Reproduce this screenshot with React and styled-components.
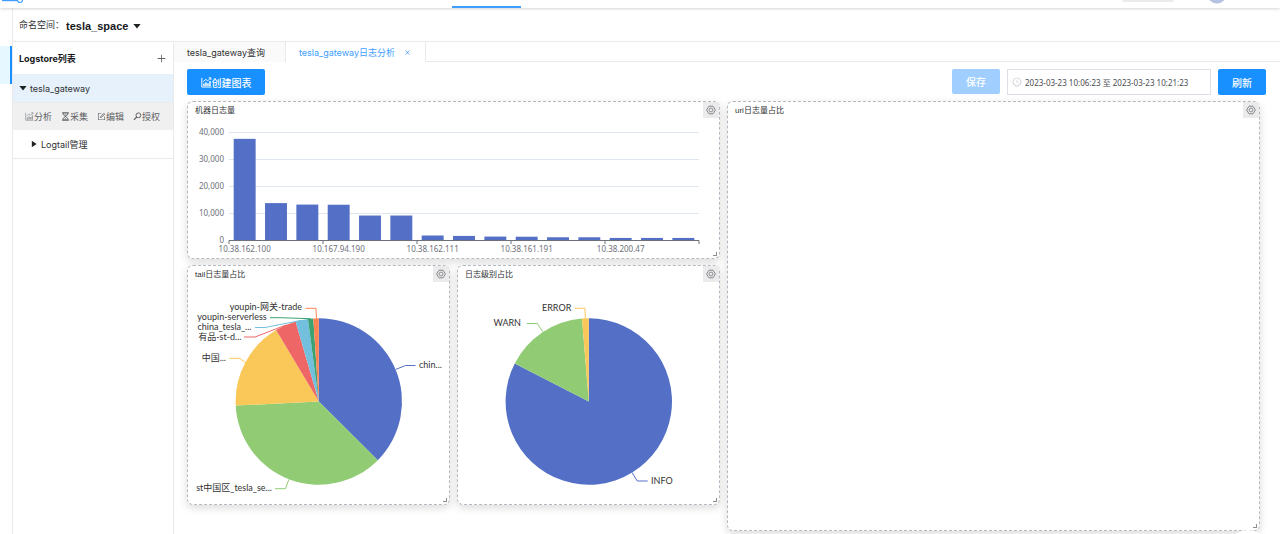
import React from 'react'
import styled, { createGlobalStyle, ThemeProvider } from 'styled-components'
import {
  AiOutlineForm,
  AiOutlineClockCircle,
  AiOutlinePlus,
  AiOutlineClose,
} from 'react-icons/ai'

const theme = {
  primary: '#1890ff',
  link: '#409eff',
  border: '#e8eaec',
  text: '#303133',
  muted: '#606266',
  mobile: '720px',
}

const palette = ['#5470c6', '#91cc75', '#fac858', '#ee6666', '#73c0de', '#3ba272', '#fc8452']

const GlobalStyle = createGlobalStyle`
  * {
    box-sizing: border-box;
  }
  body {
    margin: 0;
    overflow: hidden;
    background: #ffffff;
    color: #303133;
    font-family: Inter, "Noto Sans CJK SC", sans-serif;
    font-size: 9px;
  }
  button, input, select {
    margin: 0;
    padding: 0;
    border: none;
    background: none;
    color: inherit;
    font: inherit;
  }
  button {
    cursor: pointer;
  }
`

const Page = styled.div`
  display: flex;
  flex-direction: column;
  min-height: 100vh;
`

/* top bar */
const TopBar = styled.header`
  z-index: 1;
  display: grid;
  grid-template-columns: 452px 69px 1fr auto;
  height: 8px;
  box-shadow: 0 1px 3px rgba(0, 21, 41, 0.18);
  background: #ffffff;
`
const Brand = styled.svg`
  width: 24px;
  height: 4px;
`
const NavMark = styled.div`
  align-self: end;
  height: 2px;
  background: ${({ theme }) => theme.link};
`
const TopTools = styled.div`
  display: flex;
  grid-column: 4;
  gap: 33px;
  height: 4px;
  padding-right: 53px;
  overflow: hidden;
`
const Pill = styled.div`
  width: 52px;
  height: 2px;
  border-radius: 0 0 2px 2px;
  background: #ebebeb;
`
const Avatar = styled.svg`
  width: 20px;
  height: 4px;
`

/* shell */
const Shell = styled.div`
  display: flex;
  flex: 1;
`
const Rail = styled.nav`
  flex: none;
  width: 13px;
  padding-top: 38px;
  border-right: 1px solid ${({ theme }) => theme.border};
`
const RailItem = styled.a`
  display: block;
  height: 38px;
  border-right: 2px solid ${({ theme }) => theme.primary};
  background: #e6f7ff;
`
const Main = styled.div`
  display: flex;
  flex: 1;
  flex-direction: column;
  min-width: 0;
`
const NamespaceBar = styled.div`
  display: flex;
  align-items: center;
  height: 34px;
  padding-left: 6px;
  border-bottom: 1px solid ${({ theme }) => theme.border};
`
const NamespaceLabel = styled.label`
  width: 47px;
  white-space: nowrap;
`
const NamespacePicker = styled.div`
  display: flex;
  align-items: center;
  padding-top: 3px;
`
const NamespaceSelect = styled.select`
  width: 67px;
  outline: none;
  appearance: none;
  color: #17191c;
  font-family: "Liberation Sans", sans-serif;
  font-size: 11px;
  font-weight: bold;
`
const Caret = styled.svg`
  flex: none;
  width: 8px;
  height: 8px;
  fill: #1f2225;
`
const Body = styled.div`
  display: flex;
  flex: 1;
`

/* logstore tree */
const Sidebar = styled.aside`
  flex: none;
  width: 161px;
  border-right: 1px solid ${({ theme }) => theme.border};
`
const SidebarHeader = styled.div`
  display: flex;
  align-items: center;
  justify-content: space-between;
  height: 32px;
  padding: 0 6px;
`
const SidebarTitle = styled.h2`
  margin: 0;
  color: #17191c;
  font-size: 9px;
`
const IconButton = styled.button`
  display: flex;
  align-items: center;
  justify-content: center;
  color: ${({ theme }) => theme.muted};
  font-size: ${({ $size }) => $size}px;
`
const TreeRow = styled.button`
  display: flex;
  align-items: center;
  gap: 3px;
  width: 100%;
  height: 29px;
  padding-left: ${({ $child }) => ($child ? 17 : 6)}px;
  border-bottom: 1px solid ${({ theme }) => theme.border};
  background: ${({ $active }) => ($active ? '#e6f1fc' : '#ffffff')};
`
const Actions = styled.div`
  display: flex;
  align-items: center;
  justify-content: space-between;
  height: 27px;
  padding: 0 13px 0 12px;
  background: #f0f0f0;
`
const Action = styled.button`
  display: flex;
  align-items: center;
  color: ${({ theme }) => theme.muted};
`

/* workspace */
const Workspace = styled.main`
  display: flex;
  flex: 1;
  flex-direction: column;
  min-width: 0;
`
const Tabs = styled.div`
  display: flex;
  height: 20px;
  border-bottom: 1px solid ${({ theme }) => theme.border};
`
const Tab = styled.div`
  display: flex;
  align-items: center;
  gap: 9px;
  width: ${({ $active }) => ($active ? 140 : 112)}px;
  height: 20px;
  padding-left: 13px;
  border-right: 1px solid ${({ theme }) => theme.border};
  background: ${({ $active }) => ($active ? '#ffffff' : '#fafafa')};
  color: ${({ $active, theme }) => ($active ? theme.link : theme.text)};
  white-space: nowrap;
`
const TabClose = styled(IconButton)`
  color: ${({ theme }) => theme.link};
`
const Toolbar = styled.div`
  display: flex;
  align-items: flex-start;
  gap: 7px;
  padding: 7px 14px 6px 13px;
`
const Button = styled.button`
  display: flex;
  align-items: center;
  justify-content: center;
  width: ${({ $wide }) => ($wide ? 78 : 48)}px;
  height: ${({ disabled }) => (disabled ? 25 : 26)}px;
  border-radius: 2px;
  background: ${({ disabled, theme }) => (disabled ? '#a0cfff' : theme.primary)};
  color: #ffffff;
  font-size: 10px;
  font-weight: 500;
`
const Spacer = styled.div`
  flex: 1;
`
const RangePicker = styled.label`
  display: flex;
  align-items: center;
  gap: 3px;
  width: 204px;
  height: 26px;
  padding: 0 4px;
  border: 1px solid #dcdfe6;
  color: #c0c4cc;
  font-size: 10px;
`
const RangeInput = styled.input`
  flex: 1;
  min-width: 0;
  outline: none;
  color: #4c4e52;
  font-family: "Noto Sans", "Noto Sans CJK SC", sans-serif;
  font-size: 8px;
`

/* dashboard */
const Dashboard = styled.div`
  display: grid;
  grid-template-columns: repeat(4, 1fr);
  grid-template-rows: auto auto 20px;
  gap: 6px 7px;
  padding: 0 20px 2px 13px;
  @media (max-width: ${({ theme }) => theme.mobile}) {
    grid-template-columns: 1fr;
    grid-template-rows: auto;
  }
`
const Card = styled.section`
  display: flex;
  flex-direction: column;
  grid-column: span ${({ $cols }) => $cols};
  grid-row: span ${({ $rows }) => $rows};
  min-width: 0;
  border: 1px dashed #b4b8c0;
  border-radius: 6px;
  background: #ffffff;
  box-shadow: 0 3px 8px rgba(0, 0, 0, 0.14);
  @media (max-width: ${({ theme }) => theme.mobile}) {
    grid-column: auto;
    grid-row: auto;
  }
`
const CardHeader = styled.div`
  display: flex;
  align-items: flex-start;
  justify-content: space-between;
  height: 16px;
  padding-left: 7px;
`
const CardTitle = styled.h3`
  margin: 0;
  font-family: "Liberation Sans", "Noto Sans CJK SC", sans-serif;
  font-size: 8px;
  font-weight: normal;
  line-height: 18px;
`
const CardSetting = styled(IconButton)`
  flex: none;
  width: 16px;
  height: 16px;
  background: #ebebeb;
`
const CardBody = styled.div`
  display: flex;
  flex: 1;
`
const CardFooter = styled.div`
  display: flex;
  align-items: flex-end;
  justify-content: flex-end;
  height: 7px;
  padding: 0 2px 2px 0;
`
const ResizeHandle = styled.div`
  width: 4px;
  height: 4px;
  border-right: 1px solid #8c8c8c;
  border-bottom: 1px solid #8c8c8c;
`
const FloatingButton = styled.button`
  position: fixed;
  right: 12px;
  bottom: -36px;
  width: 40px;
  height: 40px;
  border-radius: 50%;
  background: #ffffff;
`

/* charts */
const ChartSvg = styled.svg`
  display: block;
  overflow: visible;
  font-family: "Noto Sans", "Noto Sans CJK SC", sans-serif;
  font-size: 8px;
`
const YAxis = styled(ChartSvg)`
  flex: none;
  width: 41px;
  height: 133px;
  fill: #6e7079;
`
const Plot = styled(ChartSvg)`
  flex: 1;
  min-width: 0;
  height: 133px;
  margin-right: 20px;
  fill: #6e7079;
`
const PieSvg = styled(ChartSvg)`
  width: 100%;
  height: 215px;
  fill: #333333;
  font-family: Lato, "Noto Sans CJK SC", sans-serif;
  font-size: 9px;
`

const CaretDown = () => (
  <Caret viewBox="0 0 8 8">
    <path d="M0.4 2h7.2L4 6.4z" />
  </Caret>
)

const CaretRight = () => (
  <Caret viewBox="0 0 8 8">
    <path d="M1.8 0.8v6.4L6.6 4z" />
  </Caret>
)

const ChartIcon = ({ size = 9, color = 'currentColor' }) => (
  <svg width={size} height={size} viewBox="0 0 12 12" fill="none" stroke={color}>
    <path d="M0.9 1v10h10.6" strokeWidth="1" />
    <path d="M3.2 10V7.2M5.4 10V5.8M7.6 10V6.8M9.8 10V4.4" strokeWidth="1.6" />
    <path d="M2.4 5.2 5.2 2.6 7.4 4.2 10.6 1M8.4 0.9h2.4v2.3" strokeWidth="1" />
  </svg>
)

const HourglassIcon = () => (
  <svg width="9" height="9" viewBox="0 0 9 9" fill="none" stroke="currentColor">
    <path d="M1.2 0.8h6.6M1.2 8.2h6.6" strokeWidth="1.2" />
    <path d="M2.2 1v1.6L4.5 4.5 6.8 2.6V1M2.2 8V6.4L4.5 4.5 6.8 6.4V8" strokeWidth="0.9" />
    <path d="M3.2 2.4h2.6L4.5 3.8zM3 7.6h3L4.5 6.2z" fill="currentColor" stroke="none" />
  </svg>
)

const KeyIcon = () => (
  <svg width="9" height="9" viewBox="0 0 9 9" fill="none" stroke="currentColor">
    <circle cx="5.4" cy="3.3" r="2.4" />
    <path d="M3.7 5 0.9 7.9" strokeWidth="1.2" />
  </svg>
)

const SettingIcon = () => (
  <svg width="10" height="10" viewBox="0 0 10 10" fill="none" stroke="#85878b">
    <path d="M3 1.2h4L9.4 5 7 8.8H3L0.6 5z" strokeWidth="1" strokeLinejoin="round" />
    <circle cx="5" cy="5" r="1.9" strokeWidth="0.9" />
  </svg>
)

const hosts = [
  { ip: '10.38.162.100', count: 37650 },
  { count: 13850 },
  { count: 13300 },
  { ip: '10.167.94.190', count: 13250 },
  { count: 9250 },
  { count: 9250 },
  { ip: '10.38.162.111', count: 1850 },
  { count: 1700 },
  { count: 1450 },
  { ip: '10.38.161.191', count: 1400 },
  { count: 1200 },
  { count: 1200 },
  { ip: '10.38.200.47', count: 950 },
  { count: 950 },
  { count: 950 },
]

const AXIS_BOTTOM = 122.5
const toY = (count) => AXIS_BOTTOM - (count / 10000) * 27

const BarChart = () => {
  const step = 100 / hosts.length
  return (
    <>
      <YAxis>
        {[0, 10000, 20000, 30000, 40000].map((v) => (
          <text key={v} x="36" y={toY(v) + 2.5} textAnchor="end">
            {v.toLocaleString('en-US')}
          </text>
        ))}
      </YAxis>
      <Plot>
        {[10000, 20000, 30000, 40000].map((v) => (
          <line key={v} x1="0" x2="100%" y1={toY(v)} y2={toY(v)} stroke="#e0e6f1" />
        ))}
        {hosts.map(({ count }, i) => (
          <rect
            key={i}
            x={`${(i + 0.15) * step}%`}
            y={toY(count)}
            width={`${step * 0.7}%`}
            height={AXIS_BOTTOM - toY(count)}
            fill={palette[0]}
          />
        ))}
        <line x1="0" x2="100%" y1={AXIS_BOTTOM} y2={AXIS_BOTTOM} stroke="#6e7079" />
        {[0, 3, 6, 9, 12, 15].map((i) => (
          <line
            key={i}
            x1={`${i * step}%`}
            x2={`${i * step}%`}
            y1={AXIS_BOTTOM}
            y2={AXIS_BOTTOM + 3.5}
            stroke="#6e7079"
          />
        ))}
        {hosts.map(({ ip }, i) =>
          ip ? (
            <text key={ip} x={`${(i + 0.5) * step}%`} y={AXIS_BOTTOM + 11.5} textAnchor="middle">
              {ip}
            </text>
          ) : null
        )}
      </Plot>
    </>
  )
}

// `to` is the clockwise end angle of the slice in degrees
const tailSlices = [
  { name: 'chin...', to: 134.8, x: 231, y: 86, anchor: 'start', line: '208,87.3 217.5,83.5 227.5,83.5' },
  { name: 'st中国区_tesla_se...', to: 267.2, x: 84, y: 209, anchor: 'end', line: '100.8,197.5 97.5,206.7 87,206.7' },
  { name: '中国...', to: 329.1, x: 38, y: 79, anchor: 'end', line: '57.3,80.5 51.7,76.3 41.3,76.3' },
  { name: '有品-st-d...', to: 343.8, x: 53.5, y: 57.5, anchor: 'end', line: '98,43 67,55 56,55' },
  { name: 'china_tesla_...', to: 352.5, x: 63.5, y: 47.5, anchor: 'end', line: '113.5,38.3 77,45.5 67,45.5' },
  { name: 'youpin-serverless', to: 356.2, x: 78.7, y: 38, anchor: 'end', line: '122.7,36.7 92,35.7 82,35.7' },
  { name: 'youpin-网关-trade', to: 360, x: 114, y: 27.7, anchor: 'end', line: '128.5,36.5 128,26.3 117.5,26.3' },
]

const levelSlices = [
  { name: 'INFO', to: 297.1, x: 193, y: 201.5, anchor: 'start', line: '174,190.5 179.3,199 189.7,199' },
  { name: 'WARN', to: 355.3, x: 63, y: 44, anchor: 'end', line: '84.7,49.7 79.3,41.5 68.7,41.5' },
  { name: 'ERROR', to: 360, x: 113.3, y: 28.5, anchor: 'end', line: '127.3,36.5 127,26.3 116.7,26.3' },
]

const CX = 130.8
const CY = 119.5
const R = 83.2

const point = (deg) => {
  const rad = (deg * Math.PI) / 180
  return `${CX + R * Math.sin(rad)} ${CY - R * Math.cos(rad)}`
}

const PieChart = ({ slices }) => (
  <PieSvg viewBox="0 0 261 215">
    {slices.map(({ name, to, x, y, anchor, line }, i) => {
      const from = i ? slices[i - 1].to : 0
      return (
        <g key={name}>
          <path
            d={`M${CX} ${CY}L${point(from)}A${R} ${R} 0 ${to - from > 180 ? 1 : 0} 1 ${point(to)}Z`}
            fill={palette[i]}
          />
          <polyline points={line} fill="none" stroke={palette[i]} />
          <text x={x} y={y} textAnchor={anchor}>
            {name}
          </text>
        </g>
      )
    })}
  </PieSvg>
)

const Panel = ({ title, cols, rows, children }) => (
  <Card $cols={cols} $rows={rows}>
    <CardHeader>
      <CardTitle>{title}</CardTitle>
      <CardSetting $size={10} aria-label="设置">
        <SettingIcon />
      </CardSetting>
    </CardHeader>
    <CardBody>{children}</CardBody>
    <CardFooter>
      <ResizeHandle />
    </CardFooter>
  </Card>
)

const App = () => (
  <ThemeProvider theme={theme}>
    <GlobalStyle />
    <Page>
      <TopBar>
        <Brand viewBox="0 0 24 4" fill="none" stroke={theme.link}>
          <path d="M2 0.6h15" strokeWidth="1.2" />
          <circle cx="20" cy="0" r="2.5" strokeWidth="1.2" />
        </Brand>
        <NavMark />
        <TopTools>
          <Pill />
          <Avatar viewBox="0 0 20 4">
            <circle cx="10" cy="-6.5" r="10" fill="#b4c3e1" />
          </Avatar>
        </TopTools>
      </TopBar>
      <Shell>
        <Rail>
          <RailItem href="#logs" aria-label="日志" />
        </Rail>
        <Main>
          <NamespaceBar>
            <NamespaceLabel htmlFor="namespace">命名空间：</NamespaceLabel>
            <NamespacePicker>
              <NamespaceSelect id="namespace">
                <option>tesla_space</option>
              </NamespaceSelect>
              <CaretDown />
            </NamespacePicker>
          </NamespaceBar>
          <Body>
            <Sidebar>
              <SidebarHeader>
                <SidebarTitle>Logstore列表</SidebarTitle>
                <IconButton $size={11} aria-label="新增">
                  <AiOutlinePlus />
                </IconButton>
              </SidebarHeader>
              <TreeRow $active>
                <CaretDown />
                tesla_gateway
              </TreeRow>
              <Actions>
                <Action><ChartIcon color="#96989b" />分析</Action>
                <Action><HourglassIcon />采集</Action>
                <Action><AiOutlineForm />编辑</Action>
                <Action><KeyIcon />授权</Action>
              </Actions>
              <TreeRow $child>
                <CaretRight />
                Logtail管理
              </TreeRow>
            </Sidebar>
            <Workspace>
              <Tabs>
                <Tab>tesla_gateway查询</Tab>
                <Tab $active>
                  tesla_gateway日志分析
                  <TabClose $size={7} aria-label="关闭">
                    <AiOutlineClose />
                  </TabClose>
                </Tab>
              </Tabs>
              <Toolbar>
                <Button $wide>
                  <ChartIcon size={11} />
                  创建图表
                </Button>
                <Spacer />
                <Button disabled>保存</Button>
                <RangePicker>
                  <AiOutlineClockCircle />
                  <RangeInput
                    readOnly
                    aria-label="时间范围"
                    value="2023-03-23 10:06:23 至 2023-03-23 10:21:23"
                  />
                </RangePicker>
                <Button>刷新</Button>
              </Toolbar>
              <Dashboard>
                <Panel title="机器日志量" cols={2} rows={1}>
                  <BarChart />
                </Panel>
                <Panel title="uri日志量占比" cols={2} rows={3} />
                <Panel title="tail日志量占比" cols={1} rows={1}>
                  <PieChart slices={tailSlices} />
                </Panel>
                <Panel title="日志级别占比" cols={1} rows={1}>
                  <PieChart slices={levelSlices} />
                </Panel>
              </Dashboard>
            </Workspace>
          </Body>
        </Main>
      </Shell>
      <FloatingButton aria-label="返回顶部" />
    </Page>
  </ThemeProvider>
)

export default App
